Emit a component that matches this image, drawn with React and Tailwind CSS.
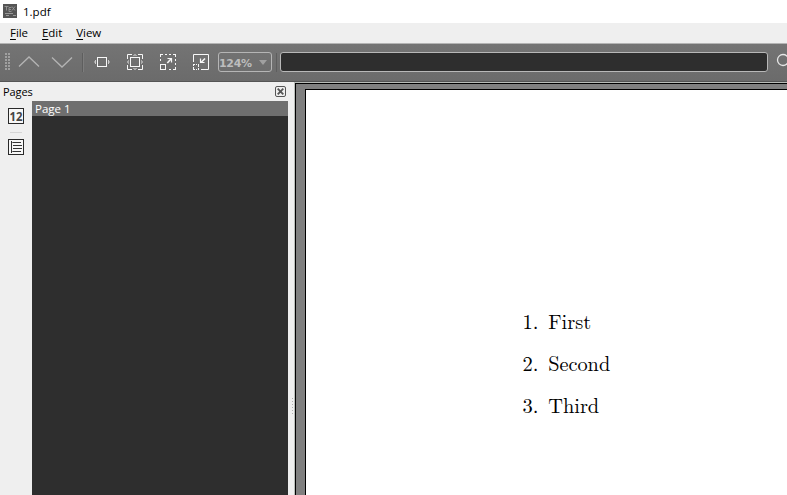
const ui = "font-['Open_Sans','Noto_Sans',sans-serif]";

function AppIcon() {
  return (
    <svg width="14" height="14" viewBox="0 0 14 14" className="mb-[2px] shrink-0">
      <rect width="14" height="14" fill="#555" />
      <path d="M1.5 2.5h4M3.5 2.5v4M6 3.5h2.5M6 3.5v4h2.5M6 5.5h2M9 2.5l3 4M12 2.5l-3 4" stroke="#a0a0a0" strokeWidth=".8" fill="none" />
      <path d="M2 9.5h8M3 11.5h3M10 11.5h3" stroke="#999" strokeWidth="1" fill="none" />
    </svg>
  );
}

function Grip() {
  return (
    <svg width="6" height="18" viewBox="0 0 6 18" className="ml-[5px] shrink-0" shapeRendering="crispEdges">
      {[0, 3, 6, 9, 12, 15].map((y) => (
        <g key={y} fill="#a0a0a0">
          <rect x="0" y={y} width="2" height="2" />
          <rect x="3" y={y} width="2" height="2" />
        </g>
      ))}
    </svg>
  );
}

function Chevron({ d }) {
  return (
    <svg width="22" height="14" viewBox="0 0 22 14" className="shrink-0" fill="none" stroke="#b4b4b4" strokeWidth="1.3">
      <path d={d} />
    </svg>
  );
}

function Icon({ children, className }) {
  return (
    <svg width="18" height="18" viewBox="0 0 18 18" className={`shrink-0 ${className}`} fill="none" stroke="#f8f8f8" strokeWidth="1">
      {children}
    </svg>
  );
}

function Toolbar() {
  return (
    <div className="flex h-[37px] shrink-0 items-center overflow-hidden bg-gradient-to-b from-[#747474] to-[#6b6b6b] pb-px">
      <Grip />
      <div className="ml-[7px] flex gap-[11px]">
        <Chevron d="M1 11.5L11 2L21 11.5" />
        <Chevron d="M1 2.5L11 12L21 2.5" />
      </div>
      <div className="ml-[9px] h-[19px] w-px shrink-0 bg-[#5e5e5e]" />
      <div className="h-[19px] w-px shrink-0 bg-[#7d7d7d]" />
      <Icon className="ml-[9px]">
        <rect x="4.5" y="4.5" width="9" height="9" />
        <path d="M2.5 7v4M15.5 7v4M1 9h1M16 9h1" stroke="#ccc" />
      </Icon>
      <Icon className="ml-[15px]">
        <rect x="4.5" y="4.5" width="9" height="9" />
        <path d="M1.5 6V1.5H6M12 1.5h4.500V6M16.500 12v4.500H12M6 16.500H1.500V12" />
        <path d="M8 1.500h2M7 2.500h4M7 15.500h4M8 16.500h2M1.500 8v2M2.500 7v4M15.500 7v4M16.500 8v2" stroke="#aaa" />
      </Icon>
      <Icon className="ml-[15px]">
        <rect x="1.500" y="11.500" width="5" height="5" />
        <path d="M1 1.500h3M6 1.500h2M10 1.500h2M14 1.500h3M1.500 1v3M1.500 6v2M16.500 1v3M16.500 6v2M16.500 10v2M16.500 14v3M14 16.500h3M10 16.500h2" />
        <path d="M8.300 10L12 6" strokeWidth="1.600" />
        <path d="M8.500 5.500h4v4" strokeWidth="1.200" />
      </Icon>
      <Icon className="ml-[15px]">
        <path d="M1.500 9V1.500H16.500V16.500H9" />
        <path d="M1 11.500h2M4 11.500h1M6 11.500h1M1.500 11v2M1.500 14v3M1 16.500h2M4 16.500h1M6.500 15v2M6.500 12v2" />
        <path d="M13 5.500L9 9.500" strokeWidth="1.600" />
        <path d="M8.500 5.500v4h4" strokeWidth="1.200" />
      </Icon>
      <div className="ml-2 flex h-5 w-[54px] shrink-0 items-center rounded-[3px] border border-[#b5b5b5]">
        <span className="w-[34px] pt-[2px] font-['DejaVu_Sans',sans-serif] text-[11px] leading-none font-bold tracking-[-0.3px] text-[#bdbdbd]">124%</span>
        <svg width="8" height="5" viewBox="0 0 8 5" className="ml-[6px]"><path d="M0 0h8L4 5z" fill="#a0a0a0" /></svg>
      </div>
      <div className="ml-[4px] h-[19px] w-px shrink-0 bg-[#5e5e5e]" />
      <div className="ml-[3px] h-5 w-[488px] shrink-0 rounded-[3px] border border-[#b8b8b8] bg-[#2e2e2e]" />
      <svg width="18" height="18" viewBox="0 0 18 18" className="ml-2 shrink-0" fill="none" stroke="#e6e6e6" strokeWidth="1.300">
        <circle cx="7" cy="7" r="5.500" />
        <path d="M11 11l5 5" />
      </svg>
    </div>
  );
}

function Sidebar() {
  return (
    <aside className="flex w-[294px] shrink-0 flex-col bg-[#efefef]">
      <div className="flex h-[19px] shrink-0 items-center justify-between pr-2 pl-[3px]">
        <span className={`${ui} text-[11px] leading-4 tracking-[-0.1px] text-black`}>Pages</span>
        <svg width="11" height="11" viewBox="0 0 11 11" fill="none" stroke="#555">
          <rect x=".5" y=".5" width="10" height="10" rx="1.500" />
          <path d="M2.700 2.700l5.600 5.600M8.300 2.700l-5.600 5.600" strokeWidth="1.800" />
        </svg>
      </div>
      <div className="flex min-h-0 flex-1">
        <div className="flex w-8 shrink-0 flex-col items-center pt-[7px]">
          <svg width="16" height="16" viewBox="0 0 16 16">
            <rect x=".5" y=".5" width="15" height="15" fill="#f7f7f7" stroke="#292929" />
            <text x="1.500" y="12.500" textLength="13" lengthAdjust="spacingAndGlyphs" fontSize="13" fontWeight="700" fontFamily="Noto Sans, sans-serif" fill="#454545">12</text>
          </svg>
          <div className="mt-2 h-px w-3 bg-[#d5d5d5]" />
          <svg width="16" height="16" viewBox="0 0 16 16" className="mt-[6px]">
            <rect x=".5" y=".5" width="15" height="15" fill="#f7f7f7" stroke="#292929" />
            <path d="M3 2h1v12h-1zM5 3h8v1h-8zM5 6h9v1h-9zM5 9h9v1h-9zM5 12h8v1h-8z" fill="#333" />
            <path d="M4 3h1v1h-1zM4 12h1v1h-1z" fill="#777" />
          </svg>
        </div>
        <div className="w-64 shrink-0 bg-[#2e2e2e]">
          <div className={`h-[15px] bg-[#6f6f6f] pl-[3px] ${ui} text-[11.5px] leading-[15px] text-white`}>Page 1</div>
        </div>
        <div className="flex w-[6px] flex-col items-center pt-[297px]">
          <svg width="1" height="19" viewBox="0 0 1 19" className="ml-[2px]" shapeRendering="crispEdges">
            {[0, 3, 6, 9, 12, 15].map((y) => <rect key={y} y={y} width="1" height="1" fill="#b0b0b0" />)}
          </svg>
        </div>
      </div>
    </aside>
  );
}

const items = [
  { n: '1.', label: 'First', width: 43 },
  { n: '2.', label: 'Second', width: 62 },
  { n: '3.', label: 'Third', width: 51 },
];

export default function App() {
  return (
    <div className="flex h-[495px] w-[787px] flex-col overflow-hidden bg-[#efefef]">
      <header className="flex h-[23px] shrink-0 items-center bg-white pl-[3px]">
        <AppIcon />
        <span className={`ml-[6px] ${ui} text-[11.5px] leading-4 text-black`}>1.pdf</span>
      </header>
      <nav className={`flex h-5 shrink-0 items-center gap-[14px] pl-[10px] ${ui} text-[11.5px] leading-5 tracking-[-0.05px] text-black`}>
        {['File', 'Edit', 'View'].map((name) => (
          <span key={name}><span className="underline underline-offset-2">{name[0]}</span>{name.slice(1)}</span>
        ))}
      </nav>
      <div className="h-px shrink-0 bg-[#b4b4b4]" />
      <Toolbar />
      <div className="h-px shrink-0 bg-[#555]" />
      <main className="flex min-h-0 flex-1">
        <Sidebar />
        <section className="flex min-w-0 flex-1 border-t border-l border-[#b9bdb9]">
          <div className="flex flex-1 border-t border-l border-black bg-[#808080] pt-[5px] pl-[9px]">
            <div className="flex-1 border-t border-l border-black bg-white pt-[212px] pl-[216px]">
              {items.map((item) => (
                <svg key={item.n} width="120" height="42" viewBox="0 0 120 42" className="block" fontFamily="Latin Modern Roman, Liberation Serif, serif" fontSize="20.800" fill="#000">
                  <text x="0.400" y="27" textLength="16" lengthAdjust="spacingAndGlyphs">{item.n}</text>
                  <text x="26.200" y="27" textLength={item.width} lengthAdjust="spacingAndGlyphs">{item.label}</text>
                </svg>
              ))}
            </div>
          </div>
        </section>
      </main>
    </div>
  );
}
